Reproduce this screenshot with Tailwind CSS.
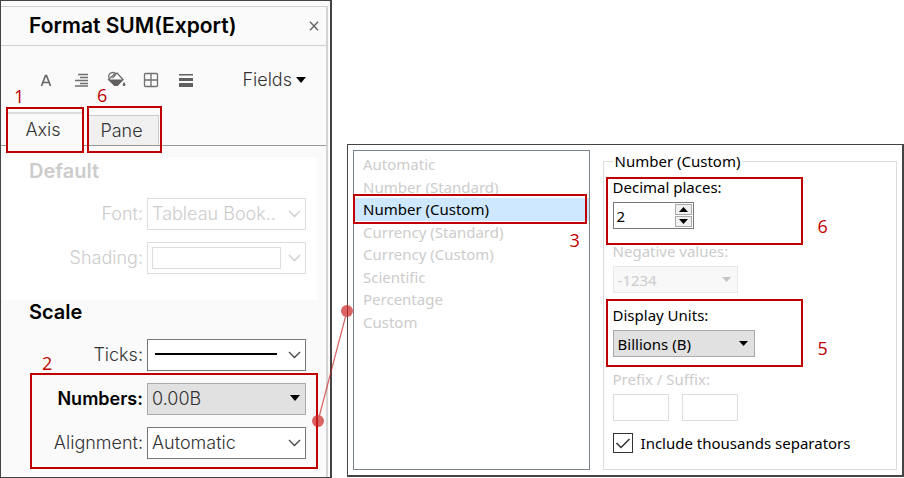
<!DOCTYPE html>
<html lang="en">
<head>
<meta charset="utf-8">
<meta name="viewport" content="width=device-width, initial-scale=1">
<title>Format SUM(Export)</title>
<script src="https://cdn.jsdelivr.net/npm/@tailwindcss/browser@4"></script>
</head>
<body class="bg-white">
<main class="grid grid-cols-[332fr_557fr] gap-[15px] items-start">

  <!-- Format pane -->
  <section class="border border-r-2 border-[#444] bg-[#fafafa] pt-[5px] pr-[2px] font-['Inter',sans-serif] text-lg leading-6 font-light text-[#333]">
    <div class="border-t border-r-2 border-t-[#d0d0d0] border-r-[#d4d4d4] pb-[18px]">
      <header class="flex h-[39px] items-center justify-between border-b border-[#d0d0d0] pr-[5px] pl-7">
        <h1 class="text-[21px] leading-6 font-semibold text-black">Format SUM(Export)</h1>
        <button type="button" aria-label="Close" class="p-[2px]">
          <svg class="size-[10px]" viewBox="0 0 10 10" fill="none" stroke="#666" stroke-width="1.4"><path d="M1 .8 9 9.2M9 .8 1 9.2"/></svg>
        </button>
      </header>

      <div class="flex h-[67px] items-center justify-between pr-5 pl-[35px]">
        <div class="flex items-center gap-[15px]">
          <button type="button" aria-label="Font" class="size-5"><svg viewBox="0 0 20 20" fill="none" stroke="#666" stroke-width="1.7"><path d="M5.500 16 9.500 5.500h1L14.500 16M7 12.500h6"/></svg></button>
          <button type="button" aria-label="Alignment" class="size-5"><svg viewBox="0 0 20 20" fill="none" stroke="#707070" stroke-width="1.300"><path d="M7 4.500h10M9 7.500h8M4 10.500h13M9 13.500h8M4 16h13"/></svg></button>
          <button type="button" aria-label="Shading" class="size-5"><svg viewBox="0 0 20 20"><path d="M2.500 9.500 8 4.500l3-1.500L17 9.500 11.500 15h-3z" fill="none" stroke="#707070" stroke-width="1.400"/><path d="M2.500 9.500h14.700L11.500 16H8.500zM18 12c1.500 2 1.800 2.800 1 3.700-.7.700-2 .4-2.200-.5-.2-.9.300-1.700 1.200-3.200z" fill="#606060"/><path d="M3 8C1.800 5 4 2.500 7 2.500c2 0 3 1.200 2.500 2.500L6.500 8" fill="none" stroke="#707070" stroke-width="1.300"/></svg></button>
          <button type="button" aria-label="Borders" class="size-5"><svg viewBox="0 0 20 20" fill="none" stroke="#707070" stroke-width="1.300"><rect x="3.500" y="3.500" width="13" height="13" rx="1"/><path d="M10 3.500v13M3.500 10h13"/></svg></button>
          <button type="button" aria-label="Lines" class="size-5"><svg viewBox="0 0 20 20" fill="#606060"><path d="M3 4h14v1.500H3zM3 8h14v3H3zM3 13h14v4H3z"/></svg></button>
        </div>
        <button type="button" class="flex items-center gap-1 font-light">Fields
          <svg class="h-[6px] w-[10px]" viewBox="0 0 10 6"><path d="M0 0h10L5 6z" fill="#000"/></svg>
        </button>
      </div>

      <div role="tablist" class="flex h-[33px] items-end gap-1 border-b border-[#999] pl-[6px]">
        <div class="relative">
          <button type="button" role="tab" aria-selected="true" class="-mb-px block h-[34px] w-[76px] border-t-2 border-[#ddd] bg-[#fafafa] pr-1 font-light">Axis</button>
          <span class="absolute -top-[5px] -left-[1px] h-[46px] w-[78px] border-2 border-[#c00000]"></span>
          <span class="absolute -top-[28px] left-[7px] font-['Open_Sans',sans-serif] font-normal text-[#c00000]">1</span>
        </div>
        <div class="relative">
          <button type="button" role="tab" aria-selected="false" class="ml-[2px] block h-[30px] w-[70px] border-t border-r border-[#ccc] bg-[#f0f0f0] pr-1 font-light">Pane</button>
          <span class="absolute -top-[9px] left-0 h-[47px] w-[75px] border-2 border-[#c00000]"></span>
          <span class="absolute -top-[32px] left-[10px] font-['Open_Sans',sans-serif] font-normal text-[#c00000]">6</span>
        </div>
      </div>

      <section class="mt-[11px] mr-[9px] flex flex-col gap-3 bg-white pt-[2px] pr-[11px] pb-[26px] pl-7 text-[#ccc]">
        <h2 class="mb-[3px] text-xl leading-6 font-semibold text-[#ccc]">Default</h2>
        <div class="flex items-center justify-end gap-1">
          <label for="font">Font:</label>
          <span class="relative w-[159px]">
            <select id="font" disabled class="block h-8 w-full appearance-none border border-[#ddd] bg-white pl-1 opacity-100"><option>Tableau Book..</option></select>
            <svg class="pointer-events-none absolute top-[12px] right-[5px] h-[8px] w-[13px]" viewBox="0 0 13 8" fill="none" stroke="#ccc" stroke-width="1.300"><path d="M1 1l5.500 5.500L12 1"/></svg>
          </span>
        </div>
        <div class="flex items-center justify-end gap-1">
          <label for="shading">Shading:</label>
          <span class="relative w-[159px]">
            <select id="shading" disabled class="block h-8 w-full appearance-none border border-[#ddd] bg-white opacity-100"><option value="none"></option></select>
            <span class="pointer-events-none absolute top-[5px] right-[25px] bottom-[5px] left-[5px] border border-[#ddd]"></span>
            <svg class="pointer-events-none absolute top-[12px] right-[5px] h-[8px] w-[13px]" viewBox="0 0 13 8" fill="none" stroke="#ccc" stroke-width="1.300"><path d="M1 1l5.500 5.500L12 1"/></svg>
          </span>
        </div>
      </section>

      <section class="flex flex-col gap-3 pr-5 pl-7">
        <h2 class="mb-[3px] text-xl leading-6 font-semibold text-black">Scale</h2>
        <div class="flex items-center justify-end gap-1">
          <label for="ticks">Ticks:</label>
          <span class="relative w-[159px]">
            <select id="ticks" class="block h-8 w-full appearance-none border border-[#777] bg-white"><option value="solid"></option></select>
            <span class="pointer-events-none absolute top-[14px] right-[29px] left-2 h-[2px] bg-black"></span>
            <svg class="pointer-events-none absolute top-[12px] right-[5px] h-[8px] w-[13px]" viewBox="0 0 13 8" fill="none" stroke="#444" stroke-width="1.300"><path d="M1 1l5.500 5.500L12 1"/></svg>
          </span>
        </div>
        <div class="relative flex flex-col gap-3">
          <div class="flex items-center justify-end gap-1">
            <label for="numbers" class="font-semibold text-black">Numbers:</label>
            <span class="relative w-[159px]">
              <select id="numbers" class="block h-8 w-full appearance-none border border-[#aaa] bg-[#e1e1e1] pl-1"><option>0.00B</option></select>
              <svg class="pointer-events-none absolute top-[12px] right-[6px] h-[6px] w-[10px]" viewBox="0 0 10 6"><path d="M0 0h10L5 6z"/></svg>
            </span>
          </div>
          <div class="flex items-center justify-end gap-1">
            <label for="alignment">Alignment:</label>
            <span class="relative w-[159px]">
              <select id="alignment" class="block h-8 w-full appearance-none border border-[#777] bg-white pl-1"><option>Automatic</option></select>
              <svg class="pointer-events-none absolute top-[12px] right-[5px] h-[8px] w-[13px]" viewBox="0 0 13 8" fill="none" stroke="#444" stroke-width="1.300"><path d="M1 1l5.500 5.500L12 1"/></svg>
            </span>
          </div>
          <span class="pointer-events-none absolute -top-[10px] -right-[12px] -bottom-[10px] left-[1px] border-2 border-[#c00000]"></span>
          <span class="absolute -top-[32px] left-[13px] font-['Open_Sans',sans-serif] font-normal text-[#c00000]">2</span>
          <!-- Connector to the number dialog -->
          <svg class="pointer-events-none absolute -top-[79px] -right-[48px] z-10 h-[124px] w-[42px]" viewBox="0 0 42 124" fill="#cc2222" opacity=".7"><path d="M6 117 35 7" stroke="#cc2222" stroke-width="1.200"/><circle cx="6" cy="117" r="6"/><circle cx="35" cy="7" r="6"/></svg>
        </div>
      </section>
    </div>
  </section>

  <!-- Number format dialog -->
  <section class="mt-36 grid grid-cols-[237fr_295fr] gap-[13px] border border-r-2 border-b-2 border-[#444] bg-white p-[5px] font-['Noto_Sans',sans-serif] text-[15px] leading-5 text-black">
    <div role="listbox" aria-label="Number format" class="border border-[#7a828a] pt-[2px] text-[#ccc]">
      <div class="grid h-[180px] grid-rows-8">
        <button type="button" role="option" aria-selected="false" class="px-[9px] text-left">Automatic</button>
        <button type="button" role="option" aria-selected="false" class="px-[9px] text-left">Number (Standard)</button>
        <div class="relative grid">
          <button type="button" role="option" aria-selected="true" class="bg-[#cde8ff] px-[9px] text-left text-black">Number (Custom)</button>
          <span class="pointer-events-none absolute -top-1 right-[2px] -bottom-[3px] -left-[1px] border-2 border-[#c00000]"></span>
          <span class="absolute top-[30px] right-[7px] w-3 font-['Open_Sans',sans-serif] text-lg leading-6 text-[#c00000]">3</span>
        </div>
        <button type="button" role="option" aria-selected="false" class="px-[9px] text-left">Currency (Standard)</button>
        <button type="button" role="option" aria-selected="false" class="px-[9px] text-left">Currency (Custom)</button>
        <button type="button" role="option" aria-selected="false" class="px-[9px] text-left">Scientific</button>
        <button type="button" role="option" aria-selected="false" class="px-[9px] text-left">Percentage</button>
        <button type="button" role="option" aria-selected="false" class="px-[9px] text-left">Custom</button>
      </div>
    </div>

    <fieldset class="border border-[#dcdcdc] px-[9px] pt-[5px] pb-4">
      <legend class="px-[2px] leading-[22px]">Number (Custom)</legend>
      <div class="flex flex-col gap-3">
        <div class="relative flex flex-col items-start gap-[5px]">
          <label for="decimals">Decimal places:</label>
          <div class="flex h-[27px] w-[81px] border border-[#777] bg-white p-[1px]">
            <input id="decimals" type="text" inputmode="numeric" value="2" class="w-full min-w-0 pl-[2px]">
            <div class="grid w-[17px] shrink-0 gap-px">
              <button type="button" aria-label="Increase" class="grid place-items-center border border-[#aaa] bg-[#f0f0f0]"><svg class="h-[5px] w-[9px]" viewBox="0 0 9 5"><path d="M4.500 0 9 5H0z"/></svg></button>
              <button type="button" aria-label="Decrease" class="grid place-items-center border border-[#aaa] bg-[#f0f0f0]"><svg class="h-[5px] w-[9px]" viewBox="0 0 9 5"><path d="M0 0h9L4.500 5z"/></svg></button>
            </div>
          </div>
          <span class="pointer-events-none absolute top-0 -left-[7px] h-[68px] w-[197px] border-2 border-[#c00000]"></span>
          <span class="absolute top-[37px] left-[205px] font-['Open_Sans',sans-serif] text-lg leading-6 text-[#c00000]">6</span>
        </div>

        <div class="flex flex-col items-start gap-[5px] text-[#ccc]">
          <label for="negative">Negative values:</label>
          <span class="relative w-[125px]">
            <select id="negative" disabled class="block h-[27px] w-full appearance-none border border-[#e8e8e8] bg-[#f8f8f8] pl-1 opacity-100"><option>-1234</option></select>
            <svg class="pointer-events-none absolute top-[11px] right-[7px] h-[5px] w-[9px]" viewBox="0 0 9 5" fill="#c4c4c4"><path d="M0 0h9L4.500 5z"/></svg>
          </span>
        </div>

        <div class="relative flex flex-col items-start gap-[5px]">
          <label for="units">Display Units:</label>
          <span class="relative w-[142px]">
            <select id="units" class="block h-[27px] w-full appearance-none border border-[#aaa] bg-[#e1e1e1] pl-1"><option>Billions (B)</option></select>
            <svg class="pointer-events-none absolute top-[11px] right-[7px] h-[5px] w-[9px]" viewBox="0 0 9 5"><path d="M0 0h9L4.500 5z"/></svg>
          </span>
          <span class="pointer-events-none absolute -top-[6px] -left-[7px] h-[68px] w-[197px] border-2 border-[#c00000]"></span>
          <span class="absolute top-[31px] left-[205px] font-['Open_Sans',sans-serif] text-lg leading-6 text-[#c00000]">5</span>
        </div>

        <div class="flex flex-col items-start gap-[5px] text-[#ccc]">
          <label for="prefix">Prefix / Suffix:</label>
          <div class="flex gap-[13px]">
            <input id="prefix" type="text" disabled class="h-[27px] w-14 border border-[#ddd] bg-white">
            <input type="text" aria-label="Suffix" disabled class="h-[27px] w-14 border border-[#ddd] bg-white">
          </div>
        </div>

        <label class="flex items-center gap-2">
          <span class="relative size-5">
            <input type="checkbox" checked class="block size-5 appearance-none border border-[#333] bg-white">
            <svg class="pointer-events-none absolute inset-0 size-5" viewBox="0 0 20 20" fill="none" stroke="#333" stroke-width="1.500"><path d="M3.500 10 8 14.500 16.500 6"/></svg>
          </span>
          Include thousands separators
        </label>
      </div>
    </fieldset>
  </section>
</main>
</body>
</html>
